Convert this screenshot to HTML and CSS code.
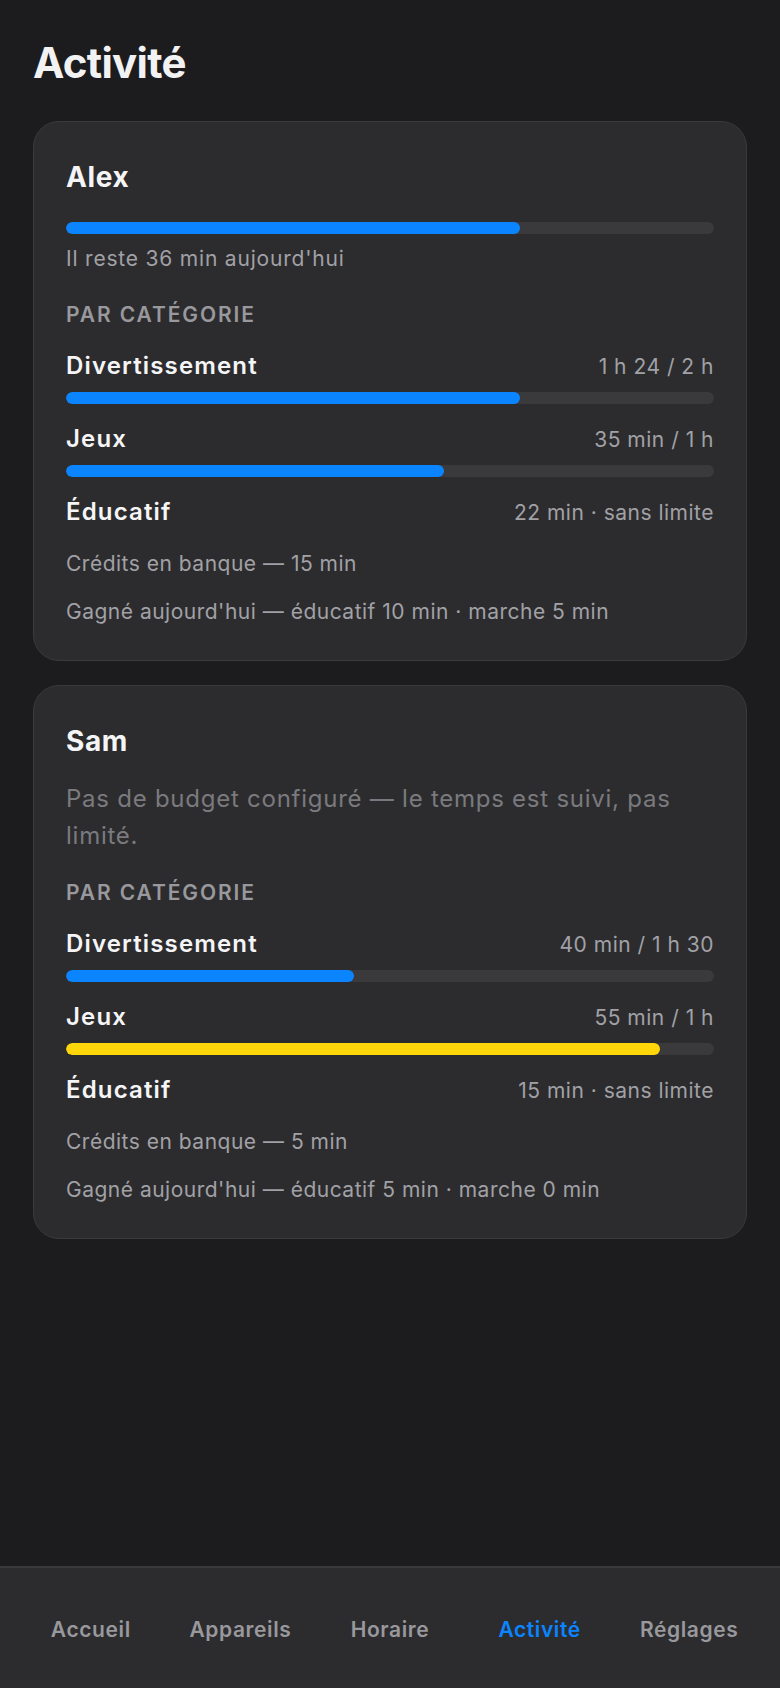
FILE: index.html
```html
<!DOCTYPE html>
<html lang="fr">
<head>
<meta charset="utf-8">
<meta name="viewport" content="width=device-width, initial-scale=1">
<title>Activité</title>
<link rel="stylesheet" href="styles.css">
</head>
<body>
<div class="screen">
  <main class="content">
    <h1 class="title">Activité</h1>

    <section class="card">
      <h2 class="name">Alex</h2>
      <div class="bar bar-main"><div class="fill" style="width:70%"></div></div>
      <p class="remaining">Il reste 36 min aujourd'hui</p>
      <h3 class="section-label">PAR CATÉGORIE</h3>
      <div class="cats">
        <div class="cat">
          <div class="cat-row"><span class="cat-name">Divertissement</span><span class="cat-value">1 h 24 / 2 h</span></div>
          <div class="bar"><div class="fill" style="width:70%"></div></div>
        </div>
        <div class="cat">
          <div class="cat-row"><span class="cat-name">Jeux</span><span class="cat-value">35 min / 1 h</span></div>
          <div class="bar"><div class="fill" style="width:58.33%"></div></div>
        </div>
        <div class="cat">
          <div class="cat-row"><span class="cat-name">Éducatif</span><span class="cat-value">22 min · sans limite</span></div>
        </div>
      </div>
      <p class="meta meta-first">Crédits en banque — 15 min</p>
      <p class="meta">Gagné aujourd'hui — éducatif 10 min · marche 5 min</p>
    </section>

    <section class="card">
      <h2 class="name">Sam</h2>
      <p class="note">Pas de budget configuré — le temps est suivi, pas limité.</p>
      <h3 class="section-label section-label-after-note">PAR CATÉGORIE</h3>
      <div class="cats">
        <div class="cat">
          <div class="cat-row"><span class="cat-name">Divertissement</span><span class="cat-value">40 min / 1 h 30</span></div>
          <div class="bar"><div class="fill" style="width:44.44%"></div></div>
        </div>
        <div class="cat">
          <div class="cat-row"><span class="cat-name">Jeux</span><span class="cat-value">55 min / 1 h</span></div>
          <div class="bar"><div class="fill fill-warn" style="width:91.67%"></div></div>
        </div>
        <div class="cat">
          <div class="cat-row"><span class="cat-name">Éducatif</span><span class="cat-value">15 min · sans limite</span></div>
        </div>
      </div>
      <p class="meta meta-first">Crédits en banque — 5 min</p>
      <p class="meta">Gagné aujourd'hui — éducatif 5 min · marche 0 min</p>
    </section>
  </main>

  <nav class="tabbar">
    <a class="tab">Accueil</a>
    <a class="tab">Appareils</a>
    <a class="tab">Horaire</a>
    <a class="tab tab-active">Activité</a>
    <a class="tab">Réglages</a>
  </nav>
</div>
</body>
</html>
```

FILE: styles.css
```css
* {
  box-sizing: border-box;
}

html, body {
  margin: 0;
  padding: 0;
  background: #1c1c1e;
}

body {
  font-family: Inter, "Noto Sans", "Liberation Sans", sans-serif;
  color: #f2f2f7;
  -webkit-font-smoothing: antialiased;
}

.screen {
  min-height: 100vh;
  display: flex;
  flex-direction: column;
}

.content {
  flex: 1;
  padding: 38px 33px 24px;
  display: flex;
  flex-direction: column;
  gap: 24px;
}

.title {
  margin: 0 0 9px;
  font-size: 42px;
  line-height: 50px;
  font-weight: 700;
  letter-spacing: -0.7px;
  color: #f2f2f2;
}

.card {
  background: #2c2c2e;
  border: 1px solid #3a3a3c;
  border-radius: 26px;
  padding: 38px 32px 34px;
}

.name {
  margin: 0;
  font-size: 28px;
  line-height: 34px;
  font-weight: 700;
  letter-spacing: 0.6px;
  color: #f5f5f7;
}

.bar {
  height: 12px;
  border-radius: 6px;
  background: #3a3a3c;
  overflow: hidden;
  margin-top: 10px;
}

.bar-main {
  margin-top: 28px;
}

.fill {
  height: 100%;
  border-radius: 6px;
  background: #0a84ff;
}

.fill-warn {
  background: #ffd60a;
}

.remaining {
  margin: 11px 0 0;
  font-size: 21px;
  line-height: 28px;
  letter-spacing: 0.8px;
  color: #a1a1a6;
}

.note {
  margin: 22px 0 0;
  font-size: 24px;
  line-height: 37px;
  letter-spacing: 0.75px;
  color: #7a7a7e;
}

.section-label {
  margin: 28px 0 0;
  font-size: 21px;
  line-height: 28px;
  font-weight: 600;
  letter-spacing: 1.9px;
  color: #98989d;
}

.section-label-after-note {
  margin-top: 25px;
}

.cats {
  margin-top: 22px;
  display: flex;
  flex-direction: column;
  gap: 20px;
}

.cat-row {
  display: flex;
  justify-content: space-between;
  align-items: baseline;
  line-height: 30px;
}

.cat-name {
  font-size: 24px;
  font-weight: 600;
  letter-spacing: 1.15px;
  color: #f5f5f7;
}

.cat-value {
  font-size: 21px;
  letter-spacing: 0.5px;
  color: #a1a1a6;
}

.meta {
  margin: 20px 0 0;
  font-size: 21px;
  line-height: 28px;
  letter-spacing: 0.5px;
  color: #a1a1a6;
}

.meta-first {
  margin-top: 22px;
}

.tabbar {
  height: 122px;
  background: #2c2c2e;
  border-top: 2px solid #3a3a3c;
  display: flex;
  align-items: center;
  padding: 2px 16px 0;
}

.tab {
  flex: 1;
  text-align: center;
  font-size: 21px;
  font-weight: 600;
  letter-spacing: 0.6px;
  color: #98989d;
}

.tab-active {
  color: #0a84ff;
}
```
